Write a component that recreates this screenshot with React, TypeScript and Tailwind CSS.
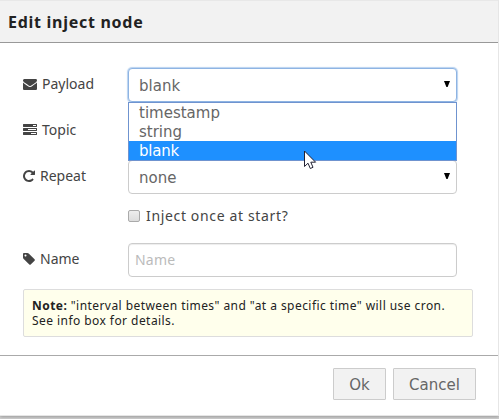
import React from "react";

const icons = {
  envelope:
    "M1792 710v794q0 66-47 113t-113 47h-1472q-66 0-113-47t-47-113v-794q44 49 101 87 362 246 497 345 57 42 92.5 65.5t94.5 48 110 24.5h2q51 0 110-24.5t94.5-48 92.5-65.5q170-123 498-345 57-39 100-87zm0-294q0 79-49 151t-122 123q-376 261-468 325-10 7-42.5 31t-54 38.5-52 32.5-57.5 27-50 9h-2q-23 0-50-9t-57.5-27-52-32.5-54-38.5-42.5-31q-91-64-262-182.5t-205-142.5q-62-42-117-115.5t-55-136.5q0-78 41.5-130t118.5-52h1472q65 0 112.5 47t47.5 113z",
  tasks:
    "M1024 1408h640v-128h-640v128zm-384-512h1024v-128h-1024v128zm640-512h384v-128h-384v128zm512 832v256q0 26-19 45t-45 19h-1664q-26 0-45-19t-19-45v-256q0-26 19-45t45-19h1664q26 0 45 19t19 45zm0-512v256q0 26-19 45t-45 19h-1664q-26 0-45-19t-19-45v-256q0-26 19-45t45-19h1664q26 0 45 19t19 45zm0-512v256q0 26-19 45t-45 19h-1664q-26 0-45-19t-19-45v-256q0-26 19-45t45-19h1664q26 0 45 19t19 45z",
  repeat:
    "M1536 256v448q0 26-19 45t-45 19h-448q-42 0-59-40-17-39 14-69l138-138q-148-137-349-137-104 0-198.5 40.5t-163.5 109.5-109.5 163.5-40.5 198.5 40.5 198.5 109.5 163.5 163.5 109.5 198.5 40.5q119 0 225-52t179-147q7-10 23-12 15 0 25 9l137 138q9 8 9.5 20.5t-7.5 22.5q-109 132-264 204.5t-327 72.5q-156 0-298-61t-245-164-164-245-61-298 61-298 164-245 245-164 298-61q147 0 284.5 55.5t244.5 156.5l130-129q29-31 70-14 39 17 39 59z",
  tag: "M448 448q0-53-37.5-90.5t-90.5-37.5-90.5 37.5-37.5 90.5 37.5 90.5 90.5 37.5 90.5-37.5 37.5-90.5zm1067 576q0 53-37 90l-491 492q-39 37-91 37-53 0-90-37l-715-716q-38-37-64.5-101t-26.5-117v-416q0-52 38-90t90-38h416q53 0 117 26.5t102 64.5l715 714q37 39 37 91z",
};

function Label({ icon, wide, children }: { icon: keyof typeof icons; wide?: boolean; children: string }) {
  return (
    <div className="flex h-[34px] w-[105px] shrink-0 items-start pt-[9px] text-[14px] leading-[14px] text-[#444]">
      <svg
        className={wide ? "mr-[5px] h-[14px] w-[14px]" : "mr-[5px] h-[14px] w-[12px]"}
        viewBox={wide ? "0 0 1792 1792" : "0 0 1536 1792"}
        fill="currentColor"
      >
        <path d={icons[icon]} />
      </svg>
      <span>{children}</span>
    </div>
  );
}

function Select({ value, focused }: { value: string; focused?: boolean }) {
  return (
    <div
      className={
        "flex h-[34px] w-[329px] items-center justify-between rounded border bg-white pr-[6px] pl-[10px] font-['DejaVu_Sans',sans-serif] text-[15px] text-[#666] " +
        (focused ? "border-[#8eb4e3] shadow-[0_0_1px_1px_#b9d2f0]" : "border-[#ccc]")
      }
    >
      <span className="pt-[2px] leading-5">{value}</span>
      <svg className="mb-[2px] h-[6px] w-[6px]" viewBox="0 0 6 6">
        <path d="M0 0H6L3.6 6H2.4Z" fill="#000" />
      </svg>
    </div>
  );
}

export default function App() {
  return (
    <div className="h-[419px] w-[499px] overflow-hidden bg-[#cfcfcf] font-['Noto_Sans',sans-serif]">
      <div className="flex h-[416px] w-[499px] flex-col border-r border-b border-[#e6e6e6] bg-white shadow-[0_1px_3px_#999]">
        <header className="flex h-[43px] shrink-0 items-center border-t border-b border-t-[#e8e8e8] border-b-[#999] bg-[#f2f2f2] pl-2 text-[16px] font-bold tracking-[0.72px] text-[#222]">
          Edit inject node
        </header>
        <main className="flex h-[312px] shrink-0 flex-col pt-[25px] pl-[23px]">
          <div className="relative mb-3 flex">
            <Label icon="envelope" wide>Payload</Label>
            <Select value="blank" focused />
            <ul className="absolute top-[34px] left-[105px] z-10 h-[59px] w-[329px] border border-[#6f93cf] bg-white font-['DejaVu_Sans',sans-serif] text-[15px] leading-[21px] text-[#666]">
              <li className="h-[19px] pl-[10px]">timestamp</li>
              <li className="h-[19px] pl-[10px]">string</li>
              <li className="h-[19px] bg-[#1e90ff] pl-[10px] tracking-[-0.2px] text-white">blank</li>
            </ul>
            <svg className="absolute top-[82px] left-[281px] z-20 h-[21px] w-[13px]" viewBox="0 0 13 21">
              <path d="M.5 1V16.5L4 13.2L6.3 18.5L9 17.3L6.8 12.2H11.6Z" fill="#fff" stroke="#223" />
            </svg>
          </div>
          <div className="mb-3 flex h-[34px]">
            <Label icon="tasks" wide>Topic</Label>
          </div>
          <div className="flex">
            <Label icon="repeat">Repeat</Label>
            <Select value="none" />
          </div>
          <div className="mt-[12px] flex h-[20px] items-center pl-[105px] text-[14px] text-[#444]">
            <span className="mr-[6px] h-3 w-3 rounded-[2px] border border-[#aaa] bg-gradient-to-b from-[#eee] to-[#ddd]" />
            <span className="leading-5 tracking-[0.65px]">Inject once at start?</span>
          </div>
          <div className="mt-[17px] flex">
            <Label icon="tag">Name</Label>
            <div className="flex h-[34px] w-[329px] items-center rounded border border-[#ccc] pb-[1px] pl-[6px] text-[14px] tracking-[0.2px] text-[#bbb] shadow-[inset_0_1px_1px_rgba(0,0,0,0.075)]">
              Name
            </div>
          </div>
          <p className="mt-3 h-[48px] w-[450px] rounded-[2px] border border-[#ddd] bg-[#ffffec] px-2 pt-2 text-[12px] leading-[15px] tracking-[0.44px] whitespace-nowrap text-[#222]">
            <b>Note:</b> "interval between times" and "at a specific time" will use cron.
            <br />
            See info box for details.
          </p>
        </main>
        <footer className="flex grow items-start justify-end gap-[7px] border-t border-[#aaa] pt-3 pr-[22px] font-['DejaVu_Sans',sans-serif] text-[15px] text-[#666]">
          <button className="h-8 w-[53px] rounded-[1px] border border-[#ccc] bg-[#f2f2f2] pt-[2px]">Ok</button>
          <button className="h-8 w-[83px] rounded-[1px] border border-[#ccc] bg-[#f2f2f2] pt-[2px]">Cancel</button>
        </footer>
      </div>
    </div>
  );
}
